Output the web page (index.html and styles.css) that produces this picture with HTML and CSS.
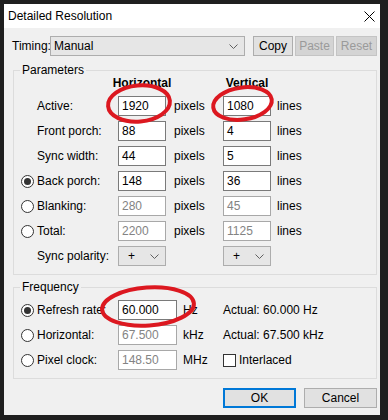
FILE: index.html
```html
<!DOCTYPE html>
<html lang="en">
<head>
  <meta charset="UTF-8">
  <title>Detailed Resolution</title>
  <link rel="stylesheet" href="styles.css">
</head>
<body>
  <div class="dialog">
    <div class="titlebar">
      <span>Detailed Resolution</span>
      <svg class="close" width="11" height="11" viewBox="0 0 11 11">
        <path d="M0.5 0.5 L10.5 10.5 M10.5 0.5 L0.5 10.5" stroke="#000" stroke-width="1" fill="none"/>
      </svg>
    </div>

    <div class="content">
      <div class="timing-row">
        <span class="timing-label">Timing:</span>
        <div class="combo timing-combo">
          <span>Manual</span>
          <svg class="chev" width="9" height="5" viewBox="0 0 9 5"><path d="M0.5 0.5 L4.5 4.5 L8.5 0.5" stroke="#606060" fill="none"/></svg>
        </div>
        <button class="btn btn-copy">Copy</button>
        <button class="btn btn-paste" disabled>Paste</button>
        <button class="btn btn-reset" disabled>Reset</button>
      </div>

      <fieldset class="group">
        <legend>Parameters</legend>
        <div class="param-grid">
          <span></span><span class="col-head">Horizontal</span><span></span><span class="col-head">Vertical</span><span></span>

          <span class="lbl">Active:</span>
          <span class="edit">1920</span><span class="unit">pixels</span>
          <span class="edit">1080</span><span class="unit unit-v">lines</span>

          <span class="lbl">Front porch:</span>
          <span class="edit">88</span><span class="unit">pixels</span>
          <span class="edit">4</span><span class="unit unit-v">lines</span>

          <span class="lbl">Sync width:</span>
          <span class="edit">44</span><span class="unit">pixels</span>
          <span class="edit">5</span><span class="unit unit-v">lines</span>

          <span class="lbl has-radio"><span class="radio checked"></span>Back porch:</span>
          <span class="edit">148</span><span class="unit">pixels</span>
          <span class="edit">36</span><span class="unit unit-v">lines</span>

          <span class="lbl has-radio"><span class="radio"></span>Blanking:</span>
          <span class="edit off">280</span><span class="unit">pixels</span>
          <span class="edit off">45</span><span class="unit unit-v">lines</span>

          <span class="lbl has-radio"><span class="radio"></span>Total:</span>
          <span class="edit off">2200</span><span class="unit">pixels</span>
          <span class="edit off">1125</span><span class="unit unit-v">lines</span>

          <span class="lbl">Sync polarity:</span>
          <div class="combo pol-combo">
            <span>+</span>
            <svg class="chev" width="9" height="5" viewBox="0 0 9 5"><path d="M0.5 0.5 L4.5 4.5 L8.5 0.5" stroke="#606060" fill="none"/></svg>
          </div>
          <span></span>
          <div class="combo pol-combo">
            <span>+</span>
            <svg class="chev" width="9" height="5" viewBox="0 0 9 5"><path d="M0.5 0.5 L4.5 4.5 L8.5 0.5" stroke="#606060" fill="none"/></svg>
          </div>
          <span></span>
        </div>
      </fieldset>

      <fieldset class="group group-freq">
        <legend>Frequency</legend>
        <div class="freq-grid">
          <span class="lbl has-radio"><span class="radio checked"></span>Refresh rate:</span>
          <span class="edit">60.000</span><span class="unit unit-f">Hz</span>
          <span>Actual: 60.000 Hz</span>

          <span class="lbl has-radio"><span class="radio"></span>Horizontal:</span>
          <span class="edit off">67.500</span><span class="unit unit-f">kHz</span>
          <span>Actual: 67.500 kHz</span>

          <span class="lbl has-radio"><span class="radio"></span>Pixel clock:</span>
          <span class="edit off">148.50</span><span class="unit unit-f">MHz</span>
          <span class="check-wrap"><span class="checkbox"></span>Interlaced</span>
        </div>
      </fieldset>

      <div class="button-row">
        <button class="btn btn-dlg btn-default">OK</button>
        <button class="btn btn-dlg">Cancel</button>
      </div>
    </div>
  </div>

  <!-- red marker circles drawn over the screenshot -->
  <svg class="marks" width="388" height="420" viewBox="0 0 388 420">
    <ellipse cx="139" cy="103.5" rx="31" ry="18" transform="rotate(-5 139 103.5)"/>
    <ellipse cx="242.5" cy="103.5" rx="29.5" ry="16" transform="rotate(-8 242.5 103.5)"/>
    <ellipse cx="148" cy="306.5" rx="46" ry="19" transform="rotate(-4 148 306.5)"/>
  </svg>
</body>
</html>
```

FILE: styles.css
```css
* {
  box-sizing: border-box;
}

body {
  margin: 0;
  padding: 4px 0 0 4px;
  width: 388px;
  height: 420px;
  background: #1f1f1f;
  font-family: 'Segoe UI', 'Liberation Sans', Arial, sans-serif;
  font-size: 12px;
  color: #000;
  position: relative;
  overflow: hidden;
}

.dialog {
  width: 376px;
  height: 411px;
  background: #f0f0f0;
}

.titlebar {
  height: 24px;
  background: #fff;
  display: flex;
  align-items: center;
  justify-content: space-between;
  padding: 0 5px 0 4px;
}

.content {
  padding: 0 3px 0 9px;
}

/* timing row */
.timing-row {
  display: flex;
  align-items: center;
  height: 20px;
  margin: 8px 0 0 -1px;
}

.timing-label {
  width: 38px;
}

.combo {
  display: flex;
  align-items: center;
  justify-content: space-between;
  height: 20px;
  background: #e6e6e6;
  border: 1px solid #adadad;
}

.timing-combo {
  width: 195px;
  padding: 0 6px 0 3px;
  margin-right: 8px;
}

.btn {
  font: inherit;
  color: #000;
  height: 20px;
  padding: 0;
  background: #e1e1e1;
  border: 1px solid #adadad;
}

.btn:disabled {
  color: #9a9a9a;
  background: #d4d4d4;
  border-color: #c4c4c4;
}

.btn-copy { width: 40px; margin-right: 2px; }
.btn-paste { width: 39px; margin-right: 2px; }
.btn-reset { width: 41px; }

/* group boxes */
.group {
  margin: 7px 0 0;
  padding: 0 0 8px 7px;
  border: 1px solid #dcdcdc;
  min-width: 0;
}

.group legend {
  padding: 0 2px;
  margin-left: -1px;
  line-height: 14px;
}

.group-freq {
  margin-top: 5px;
}

.param-grid {
  display: grid;
  grid-template-columns: 97px 48px 57px 48px 1fr;
  grid-template-rows: 14px repeat(7, 20px);
  row-gap: 5px;
  align-items: center;
}

.freq-grid {
  display: grid;
  grid-template-columns: 97px 59px 46px 1fr;
  grid-template-rows: repeat(3, 20px);
  row-gap: 5px;
  align-items: center;
  margin-top: 6px;
}

.col-head {
  display: flex;
  justify-content: center;
  align-self: start;
  white-space: nowrap;
  font-weight: bold;
  line-height: 12px;
}

.lbl {
  display: flex;
  align-items: center;
  padding-left: 16px;
  white-space: nowrap;
}

.lbl.has-radio {
  padding-left: 0;
}

.radio {
  width: 13px;
  height: 13px;
  margin-right: 3px;
  border: 1px solid #333;
  border-radius: 50%;
  background: #fff;
  display: flex;
  align-items: center;
  justify-content: center;
}

.radio.checked::after {
  content: "";
  width: 7px;
  height: 7px;
  border-radius: 50%;
  background: #333;
}

.edit {
  height: 20px;
  line-height: 18px;
  padding-left: 3px;
  background: #fff;
  border: 1px solid #7a7a7a;
}

.edit.off {
  color: #838383;
  border-color: #a8a8a8;
}

.unit {
  padding-left: 8px;
}

.unit-v {
  padding-left: 6px;
}

.unit-f {
  padding-left: 6px;
}

.pol-combo {
  padding: 0 6px 0 9px;
}

.check-wrap {
  display: flex;
  align-items: center;
}

.checkbox {
  width: 13px;
  height: 13px;
  margin-right: 3px;
  border: 1px solid #333;
  background: #fff;
}

/* bottom buttons */
.button-row {
  display: flex;
  justify-content: flex-end;
  gap: 8px;
  margin-top: 9px;
}

.btn-dlg {
  width: 73px;
}

.btn-default {
  border-color: #0078d7;
  box-shadow: inset 0 0 0 1px #0078d7;
}

.marks {
  position: absolute;
  left: 0;
  top: 0;
  pointer-events: none;
}

.marks ellipse {
  fill: none;
  stroke: #dc1820;
  stroke-width: 4;
}
```
